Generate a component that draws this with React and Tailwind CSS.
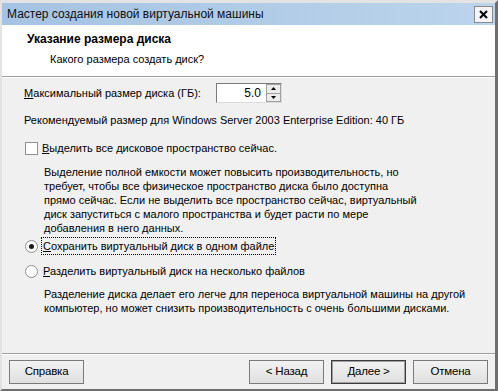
import { useState } from 'react'

const body = { fontFamily: '"Liberation Sans", Arial, sans-serif' }

function Btn({ children, primary, className = '' }) {
  return (
    <button
      className={`h-[24px] w-[75px] text-[11.5px] tracking-[-0.2px] text-[#000] bg-gradient-to-b from-[#f2f2f2] to-[#e0e0e0] border ${primary ? 'border-[#3c3c3c] shadow-[inset_0_0_0_1px_#a0a0a0]' : 'border-[#7a7a7a]'} ${className}`}
    >
      {children}
    </button>
  )
}

function Radio({ checked }) {
  return (
    <span className="w-[13px] h-[13px] rounded-full bg-white border border-[#8e8f8f] ml-[1px] flex items-center justify-center">
      {checked && <span className="w-[5px] h-[5px] rounded-full bg-[#1a1a1a]" />}
    </span>
  )
}

export default function App() {
  const [split, setSplit] = useState(false)

  return (
    <div style={body} className="w-[498px] h-[391px] bg-[#f0f0f0] flex flex-col border-l-[2px] border-t-[3px] border-r-[3px] border-b-[2px] border-l-[#e3e3e3] border-t-[#e3e3e3] border-r-[#6f6f6f] border-b-[#6f6f6f] text-[11px] text-[#000]">
      <div className="h-[22px] flex items-center justify-between pl-[5px] pr-[2px] bg-gradient-to-r from-[#a5c3e2] to-[#bcd4ec]">
        <span className="text-[12px] text-[#111]">Мастер создания новой виртуальной машины</span>
        <div className="w-[19px] h-[17px] bg-[#f4f4f4] border border-[#8a8a8a] flex items-center justify-center">
          <svg width="9" height="9" viewBox="0 0 9 9"><path d="M1 1 L8 8 M8 1 L1 8" stroke="#000" strokeWidth="2" /></svg>
        </div>
      </div>

      <div className="h-[52px] bg-white pl-[25px] pt-[6px] border-b border-[#a0a0a0]">
        <div className="font-bold text-[12px] leading-[16px]">Указание размера диска</div>
        <div className="pl-[23px] mt-[4px] leading-[16px]">Какого размера создать диск?</div>
      </div>
      <div className="h-px bg-white" />

      <div className="flex-1 pl-[22px] pr-[10px] pt-[3px] whitespace-nowrap">
        <div className="flex items-center h-[24px]">
          <span className="w-[192px]"><u>М</u>аксимальный размер диска (ГБ):</span>
          <div className="flex items-center h-[20px] w-[66px] bg-white border border-[#7a7a7a] border-r-[#dcdcdc] border-b-[#dcdcdc]">
            <span className="flex-1 text-right pr-[5px] text-[12px]">5.0</span>
            <div className="flex flex-col w-[15px] h-full">
              <div className="flex-1 bg-[#ececec] border border-[#a0a0a0] flex items-center justify-center">
                <svg width="5" height="3" viewBox="0 0 5 3"><path d="M2.5 0 L5 3 L0 3 Z" fill="#000" /></svg>
              </div>
              <div className="flex-1 bg-[#ececec] border border-[#a0a0a0] border-t-0 flex items-center justify-center">
                <svg width="5" height="3" viewBox="0 0 5 3"><path d="M0 0 L5 0 L2.5 3 Z" fill="#000" /></svg>
              </div>
            </div>
          </div>
        </div>

        <div className="mt-[8px] leading-[14px]">Рекомендуемый размер для Windows Server 2003 Enterprise Edition: 40 ГБ</div>

        <label className="mt-[13px] flex items-center gap-[4px] h-[16px]">
          <span className="w-[13px] h-[13px] bg-white border border-[#8e8f8f] ml-[1px]" />
          <span><u>В</u>ыделить все дисковое пространство сейчас.</span>
        </label>
        <p className="ml-[20px] mt-[9px] leading-[14px]">
          Выделение полной емкости может повысить производительность, но<br />
          требует, чтобы все физическое пространство диска было доступна<br />
          прямо сейчас. Если не выделить все пространство сейчас, виртуальный<br />
          диск запуститься с малого пространства и будет расти по мере<br />
          добавления в него данных.
        </p>

        <label className="mt-[3px] flex items-center gap-[4px] h-[16px]" onClick={() => setSplit(false)}>
          <Radio checked={!split} />
          <span className={`px-[1px] ${!split ? 'outline-1 outline-dotted outline-[#000]' : ''}`}><u>С</u>охранить виртуальный диск в одном файле</span>
        </label>

        <label className="mt-[9px] flex items-center gap-[4px] h-[16px]" onClick={() => setSplit(true)}>
          <Radio checked={split} />
          <span className={`px-[1px] ${split ? 'outline-1 outline-dotted outline-[#000]' : ''}`}><u>Р</u>азделить виртуальный диск на несколько файлов</span>
        </label>
        <p className="ml-[20px] mt-[8px] leading-[14px]">
          Разделение диска делает его легче для переноса виртуальной машины на другой<br />
          компьютер, но может снизить производительность с очень большими дисками.
        </p>
      </div>

      <div className="h-px bg-[#a0a0a0]" />
      <div className="h-px bg-white" />
      <div className="h-[34px] flex items-center pl-[7px] pr-[7px] pb-[1px]">
        <Btn>Справка</Btn>
        <div className="flex-1" />
        <Btn>&lt; Назад</Btn>
        <Btn primary className="ml-[7px]">Далее &gt;</Btn>
        <Btn className="ml-[7px]">Отмена</Btn>
      </div>
    </div>
  )
}
